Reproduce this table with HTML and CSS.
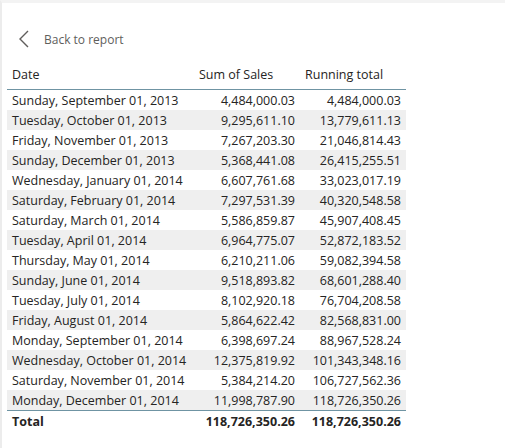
FILE: index.html
```html
<!DOCTYPE html>
<html lang="en">
<head>
  <meta charset="UTF-8">
  <title>Running total</title>
  <link rel="stylesheet" href="styles.css">
</head>
<body>
  <div class="page">
    <!-- back link -->
    <div class="back">
      <svg class="chevron" width="12" height="18" viewBox="0 0 12 18">
        <path d="M10 1 L2 9 L10 17" fill="none" stroke="#605e5c" stroke-width="1.4"/>
      </svg>
      <span>Back to report</span>
    </div>

    <table class="grid">
      <thead>
        <tr>
          <th class="col-date">Date</th>
          <th class="col-num">Sum of Sales</th>
          <th class="col-num">Running total</th>
        </tr>
      </thead>
      <tbody>
        <tr><td>Sunday, September 01, 2013</td><td>4,484,000.03</td><td>4,484,000.03</td></tr>
        <tr><td>Tuesday, October 01, 2013</td><td>9,295,611.10</td><td>13,779,611.13</td></tr>
        <tr><td>Friday, November 01, 2013</td><td>7,267,203.30</td><td>21,046,814.43</td></tr>
        <tr><td>Sunday, December 01, 2013</td><td>5,368,441.08</td><td>26,415,255.51</td></tr>
        <tr><td>Wednesday, January 01, 2014</td><td>6,607,761.68</td><td>33,023,017.19</td></tr>
        <tr><td>Saturday, February 01, 2014</td><td>7,297,531.39</td><td>40,320,548.58</td></tr>
        <tr><td>Saturday, March 01, 2014</td><td>5,586,859.87</td><td>45,907,408.45</td></tr>
        <tr><td>Tuesday, April 01, 2014</td><td>6,964,775.07</td><td>52,872,183.52</td></tr>
        <tr><td>Thursday, May 01, 2014</td><td>6,210,211.06</td><td>59,082,394.58</td></tr>
        <tr><td>Sunday, June 01, 2014</td><td>9,518,893.82</td><td>68,601,288.40</td></tr>
        <tr><td>Tuesday, July 01, 2014</td><td>8,102,920.18</td><td>76,704,208.58</td></tr>
        <tr><td>Friday, August 01, 2014</td><td>5,864,622.42</td><td>82,568,831.00</td></tr>
        <tr><td>Monday, September 01, 2014</td><td>6,398,697.24</td><td>88,967,528.24</td></tr>
        <tr><td>Wednesday, October 01, 2014</td><td>12,375,819.92</td><td>101,343,348.16</td></tr>
        <tr><td>Saturday, November 01, 2014</td><td>5,384,214.20</td><td>106,727,562.36</td></tr>
        <tr><td>Monday, December 01, 2014</td><td>11,998,787.90</td><td>118,726,350.26</td></tr>
      </tbody>
      <tfoot>
        <tr><td>Total</td><td>118,726,350.26</td><td>118,726,350.26</td></tr>
      </tfoot>
    </table>
  </div>
</body>
</html>
```

FILE: styles.css
```css
body {
  margin: 0;
  background: #ffffff;
  font-family: "Open Sans", "Noto Sans", sans-serif;
  color: #252423;
}

.page {
  height: 448px;
  box-sizing: border-box;
  border-left: 2px solid #ececec;
  border-top: 3px solid #f3f3f3;
  padding: 27px 0 0 5px;
}

.back {
  display: flex;
  align-items: center;
  gap: 14px;
  padding-left: 11px;
  height: 18px;
  font-size: 12px;
  color: #605e5c;
}

.chevron {
  display: block;
}

.grid {
  border-collapse: collapse;
  margin-top: 8px;
  font-size: 12.5px;
  table-layout: fixed;
  width: 399px;
}

.grid th {
  font-weight: normal;
  text-align: left;
  padding: 0 5px 6px;
  height: 27px;
  vertical-align: bottom;
  border-bottom: 1px solid #6f94a3;
  color: #252423;
}

.grid .col-date {
  width: 177px;
}

.grid td {
  height: 20px;
  padding: 0 5px;
  white-space: nowrap;
  text-align: right;
}

.grid td:first-child {
  text-align: left;
}

.grid tbody tr:nth-child(even) td {
  background: #efefef;
}

.grid tfoot td {
  border-top: 1px solid #6f94a3;
  font-weight: bold;
  height: 21px;
}
```
